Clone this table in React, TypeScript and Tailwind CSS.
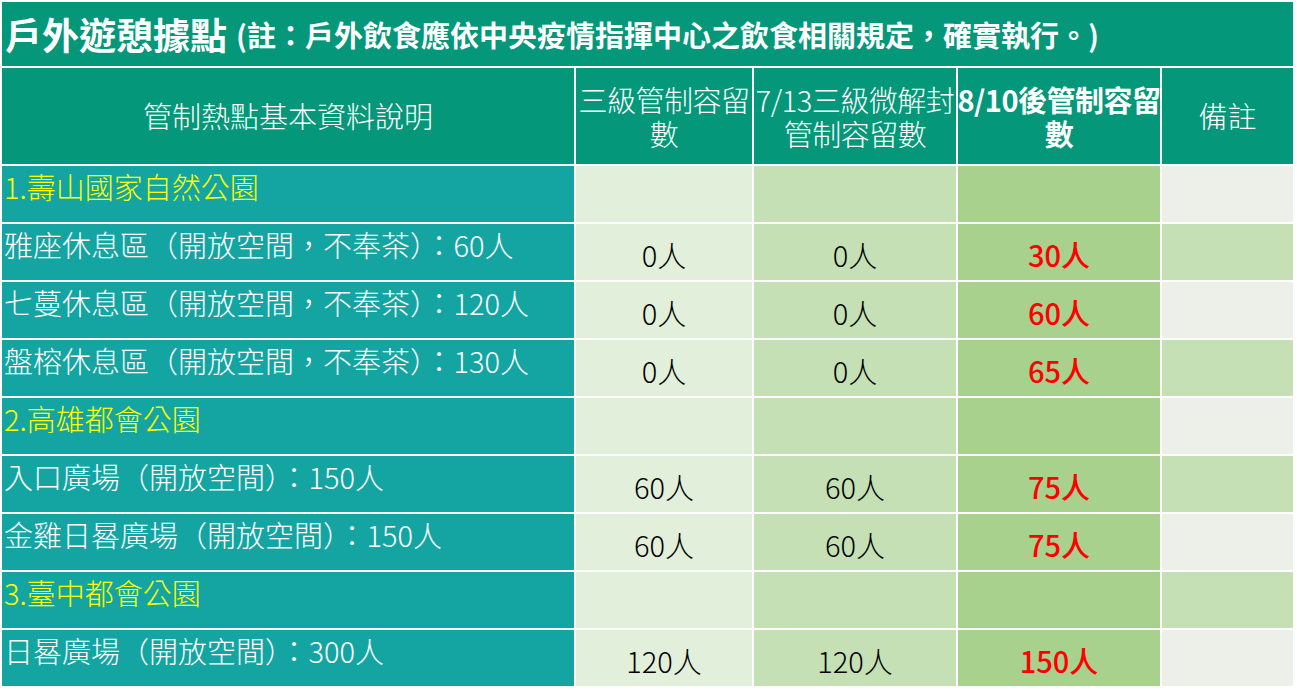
const FONT = { fontFamily: '"Noto Sans CJK TC", "Noto Sans", sans-serif' };

type Row = {
  label: string;
  section?: boolean;
  a?: string;
  b?: string;
  c?: string;
};

const ROWS: Row[] = [
  { label: '1.壽山國家自然公園', section: true },
  { label: '雅座休息區（開放空間，不奉茶）：60人', a: '0人', b: '0人', c: '30人' },
  { label: '七蔓休息區（開放空間，不奉茶）：120人', a: '0人', b: '0人', c: '60人' },
  { label: '盤榕休息區（開放空間，不奉茶）：130人', a: '0人', b: '0人', c: '65人' },
  { label: '2.高雄都會公園', section: true },
  { label: '入口廣場（開放空間）：150人', a: '60人', b: '60人', c: '75人' },
  { label: '金雞日晷廣場（開放空間）：150人', a: '60人', b: '60人', c: '75人' },
  { label: '3.臺中都會公園', section: true },
  { label: '日晷廣場（開放空間）：300人', a: '120人', b: '120人', c: '150人' },
];

export default function App() {
  return (
    <div className="w-[1297px] h-[695px] bg-white" style={FONT}>
      <div className="grid grid-cols-[572px_176px_202px_202px_131px] grid-rows-[64px_96px_repeat(9,56px)] gap-[2px] p-[2px] bg-white">
        {/* title */}
        <div className="col-span-5 bg-[#04977a] text-white font-bold flex items-center pl-[3px] whitespace-nowrap">
          <span className="text-[37px] leading-none">戶外遊憩據點</span>
          <span className="text-[29px] leading-none ml-[9px]">(註：戶外飲食應依中央疫情指揮中心之飲食相關規定，確實執行。)</span>
        </div>

        {/* header */}
        <div className="bg-[#04977a] text-white text-[29px] font-light flex items-center justify-center">
          管制熱點基本資料說明
        </div>
        <HeadCell top="三級管制容留" bottom="數" />
        <HeadCell top="7/13三級微解封" bottom="管制容留數" />
        <HeadCell top="8/10後管制容留" bottom="數" bold />
        <div className="bg-[#04977a] text-white text-[29px] font-light flex items-center justify-center">
          備註
        </div>

        {/* rows */}
        {ROWS.map((r, i) => (
          <Line key={i} row={r} odd={i % 2 === 1} />
        ))}
      </div>
    </div>
  );
}

function HeadCell({ top, bottom, bold }: { top: string; bottom: string; bold?: boolean }) {
  return (
    <div
      className={`bg-[#04977a] text-white text-[29px] flex flex-col items-center justify-center whitespace-nowrap tracking-[-0.5px] ${
        bold ? 'font-bold' : 'font-light'
      }`}
    >
      <div className="h-[34px] leading-[34px]">{top}</div>
      <div className="h-[34px] leading-[34px]">{bottom}</div>
    </div>
  );
}

function Line({ row, odd }: { row: Row; odd: boolean }) {
  return (
    <>
      <div
        className={`bg-[#14a5a3] text-[29px] font-light leading-[34px] pt-[3px] pl-[2px] whitespace-nowrap ${
          row.section ? 'text-[#ffff00]' : 'text-white'
        }`}
      >
        {row.label}
      </div>
      <div className="bg-[#e2efda] text-[29px] font-light text-black flex items-center justify-center pt-[6px]">
        {row.a}
      </div>
      <div className="bg-[#c5e0b4] text-[29px] font-light text-black flex items-center justify-center pt-[6px]">
        {row.b}
      </div>
      <div className="bg-[#a9d18e] text-[29px] font-medium text-[#ff0000] flex items-center justify-center pt-[6px]">
        {row.c}
      </div>
      <div className={odd ? 'bg-[#c5e0b4]' : 'bg-[#ecf0e9]'} />
    </>
  );
}
